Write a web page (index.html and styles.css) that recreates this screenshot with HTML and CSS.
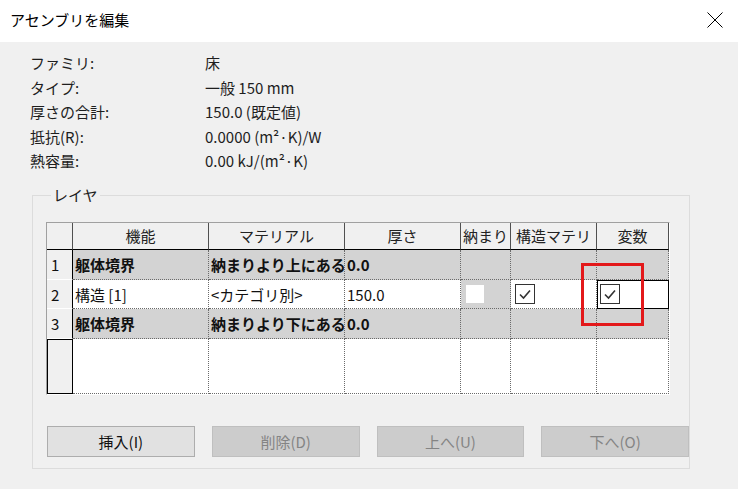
FILE: index.html
```html
<!DOCTYPE html>
<html lang="ja">
<head>
<meta charset="utf-8">
<title>アセンブリを編集</title>
<link rel="stylesheet" href="styles.css">
</head>
<body>
<div class="titlebar">
  <span class="title">アセンブリを編集</span>
  <svg class="close" width="16" height="16" viewBox="0 0 16 16"><path d="M0.5 0.5 L15.5 15.5 M15.5 0.5 L0.5 15.5" stroke="#000" stroke-width="1" fill="none"/></svg>
</div>
<div class="content">
  <div class="info">
    <div>ファミリ:</div><div>床</div>
    <div>タイプ:</div><div>一般 150 mm</div>
    <div>厚さの合計:</div><div>150.0 (既定値)</div>
    <div>抵抗(R):</div><div>0.0000 (m²·K)/W</div>
    <div>熱容量:</div><div>0.00 kJ/(m²·K)</div>
  </div>
  <div class="group">
    <span class="group-label">レイヤ</span>
    <div class="grid-wrap">
      <div class="grid">
        <div class="h corner"></div>
        <div class="h">機能</div>
        <div class="h">マテリアル</div>
        <div class="h">厚さ</div>
        <div class="h">納まり</div>
        <div class="h">構造マテリ</div>
        <div class="h last">変数</div>

        <div class="n">1</div>
        <div class="c g b">躯体境界</div>
        <div class="c g b">納まりより上にある</div>
        <div class="c g b">0.0</div>
        <div class="c g"></div>
        <div class="c g"></div>
        <div class="c g"></div>

        <div class="n">2</div>
        <div class="c">構造 [1]</div>
        <div class="c">&lt;カテゴリ別&gt;</div>
        <div class="c">150.0</div>
        <div class="c g box-cell"><span class="blank"></span></div>
        <div class="c chk-cell"><svg class="chk" width="20" height="20" viewBox="0 0 20 20"><rect x="0.5" y="0.5" width="19" height="19" fill="#fff" stroke="#333"/><path d="M5 10.5 L8.5 14 L15 6.5" fill="none" stroke="#333" stroke-width="1.6"/></svg></div>
        <div class="c chk-cell sel"><svg class="chk" width="20" height="20" viewBox="0 0 20 20"><rect x="0.5" y="0.5" width="19" height="19" fill="#fff" stroke="#333"/><path d="M5 10.5 L8.5 14 L15 6.5" fill="none" stroke="#333" stroke-width="1.6"/></svg></div>

        <div class="n">3</div>
        <div class="c g b">躯体境界</div>
        <div class="c g b">納まりより下にある</div>
        <div class="c g b">0.0</div>
        <div class="c g"></div>
        <div class="c g"></div>
        <div class="c g"></div>

        <div class="n cur"></div>
        <div class="c e"></div>
        <div class="c e"></div>
        <div class="c e"></div>
        <div class="c e"></div>
        <div class="c e"></div>
        <div class="c e"></div>
      </div>
    </div>
    <div class="buttons">
      <button class="btn">挿入(I)</button>
      <button class="btn dis">削除(D)</button>
      <button class="btn dis">上へ(U)</button>
      <button class="btn dis">下へ(O)</button>
    </div>
  </div>
</div>
<div class="redbox"></div>
</body>
</html>
```

FILE: styles.css
```css
html, body {
  margin: 0;
  padding: 0;
}
body {
  width: 738px;
  height: 489px;
  overflow: hidden;
  background: #f0f0f0;
  font-family: "Noto Sans CJK JP", "Noto Sans", sans-serif;
  font-size: 15px;
  color: #1e1e1e;
  position: relative;
}
.titlebar {
  height: 42px;
  background: #fff;
  display: flex;
  align-items: center;
  justify-content: space-between;
  padding: 0 15px 3px 10px;
  box-sizing: border-box;
}
.title {
  font-size: 15px;
  color: #000;
}
.close {
  display: block;
}
.content {
  padding: 9px 0 0 30px;
}
.info {
  display: grid;
  grid-template-columns: 175px auto;
  grid-auto-rows: 24.5px;
  line-height: 24.5px;
}
.group {
  margin: 21px 0 0 2px;
  width: 658px;
  height: 274px;
  border: 1px solid #dcdcdc;
  box-sizing: border-box;
  padding: 0 0 0 13px;
}
.group-label {
  display: block;
  width: fit-content;
  margin: -10px 0 0 5px;
  padding: 0 2px;
  background: #f0f0f0;
  line-height: 18px;
}
.grid-wrap {
  margin-top: 18px;
  width: 624px;
  border: 1px solid;
  border-color: #a0a0a0 #fff #fff #a0a0a0;
  box-sizing: border-box;
}
.grid {
  display: grid;
  grid-template-columns: 26px 136px 136px 116px 50px 86px 72px;
  grid-template-rows: 27px 30px 29px 30px 55px;
  background: #fff;
}
.grid > div {
  box-sizing: border-box;
  white-space: nowrap;
  overflow: hidden;
}
.h {
  background: #f0f0f0;
  border-right: 1px solid #505050;
  border-bottom: 1px solid #000;
  text-align: center;
  line-height: 26px;
  color: #222;
}
.h.last {
  border-right: 1px solid #505050;
}
.n {
  background: #f0f0f0;
  border-right: 1px solid #000;
  border-bottom: 1px solid #fff;
  padding-left: 4px;
  line-height: 29px;
  color: #111;
}
.n.cur {
  border: 1px solid #000;
}
.c {
  border-right: 1px dotted #6a6a6a;
  border-bottom: 1px dotted #6a6a6a;
  padding-left: 2px;
  line-height: 29px;
  color: #111;
}
.c.g {
  background: #d3d3d3;
}
.c.b {
  font-weight: bold;
}
.box-cell {
  padding: 5px 0 0 5px !important;
}
.blank {
  display: block;
  width: 18px;
  height: 18px;
  background: #fff;
}
.chk-cell {
  padding: 4px 0 0 4px !important;
}
.chk-cell.sel {
  padding-left: 3px !important;
  outline: 1px solid #000;
  outline-offset: -1px;
  border-color: #000;
}
.chk {
  display: block;
}
.buttons {
  display: flex;
  gap: 17px;
  margin: 31px 0 0 1px;
}
.btn {
  width: 148px;
  height: 31px;
  margin: 0;
  padding: 0;
  background: #e1e1e1;
  border: 1px solid #adadad;
  font-family: "Noto Sans CJK JP", "Noto Sans", sans-serif;
  font-size: 15px;
  color: #111;
}
.btn.dis {
  background: #cccccc;
  border-color: #bfbfbf;
  color: #848484;
}
.redbox {
  position: absolute;
  left: 581px;
  top: 263px;
  width: 63px;
  height: 63px;
  box-sizing: border-box;
  border: 3px solid #e3191b;
}
```
